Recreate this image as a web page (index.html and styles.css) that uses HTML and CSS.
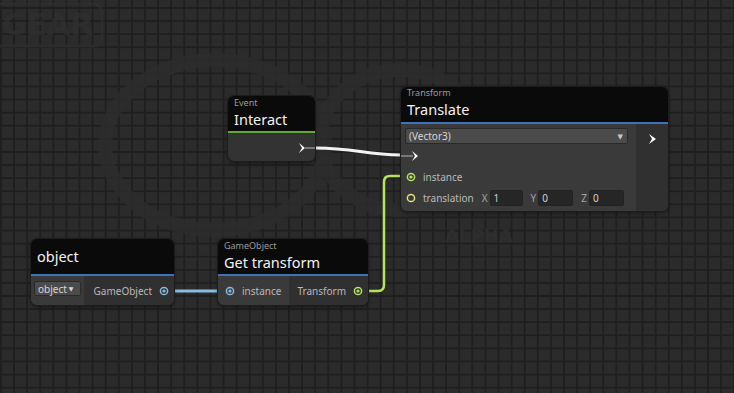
FILE: index.html
```html
<!DOCTYPE html>
<html lang="en">
<head>
  <meta charset="UTF-8" />
  <title>Graph</title>
  <link rel="stylesheet" href="styles.css">
</head>
<body>
  <div class="canvas">
    <!-- faint watermark behind the grid content -->
    <svg class="watermark" width="734" height="393">
      <rect x="-20" y="4" width="122" height="42" rx="8" fill="none" stroke="#2f2f2f" stroke-width="3"/>
      <text x="2" y="35" class="wm-text">GEAR</text>
      <ellipse cx="215" cy="145" rx="110" ry="85" fill="none" stroke="#2d2d2d" stroke-width="14"/>
      <ellipse cx="400" cy="140" rx="80" ry="70" fill="none" stroke="#2d2d2d" stroke-width="14"/>
      <text x="445" y="242" class="wm-small">ALPHA</text>
    </svg>

    <!-- wires -->
    <svg class="wires" width="734" height="393">
      <path d="M304 148 L316 148 C 355 148, 365 155, 401 155" stroke="#f2f2f2" stroke-width="3" fill="none"/>
      <path d="M168 291 L226 291" stroke="#86bddf" stroke-width="3" fill="none"/>
      <path d="M361 291 L378 291 Q384 291 384 285 L384 182 Q384 176 390 176 L408 176" stroke="#b6e35c" stroke-width="2.5" fill="none"/>
    </svg>

    <div class="node node-event">
      <div class="node-head head-green">
        <div class="node-kind">Event</div>
        <div class="node-title">Interact</div>
      </div>
      <div class="node-body body-out">
        <svg class="flow-out" width="18" height="12">
          <polygon points="1,1 4,6 1,11 7,6" fill="#fff"/>
          <rect x="6" y="5" width="12" height="2" fill="#777"/>
        </svg>
      </div>
    </div>

    <div class="node node-translate">
      <div class="node-head head-blue">
        <div class="node-kind">Transform</div>
        <div class="node-title">Translate</div>
      </div>
      <div class="node-body">
        <div class="col-in">
          <div class="dropdown wide">(Vector3)<span class="caret">&#9660;</span></div>
          <div class="row">
            <svg class="flow-in" width="18" height="12">
              <rect x="0" y="5" width="12" height="2" fill="#777"/>
              <polygon points="11,1 14,6 11,11 17,6" fill="#fff"/>
            </svg>
          </div>
          <div class="row">
            <svg class="port" width="10" height="10"><circle cx="5" cy="5" r="3.6" stroke="#b6e35c" stroke-width="1.5" fill="none"/><circle cx="5" cy="5" r="1.6" fill="#b6e35c"/></svg>
            <span class="label">instance</span>
          </div>
          <div class="row">
            <svg class="port" width="10" height="10"><circle cx="5" cy="5" r="3.6" stroke="#e4e27a" stroke-width="1.5" fill="none"/></svg>
            <span class="label">translation</span>
            <span class="axis">X</span><span class="field f-x">1</span>
            <span class="axis">Y</span><span class="field">0</span>
            <span class="axis">Z</span><span class="field">0</span>
          </div>
        </div>
        <div class="col-out">
          <svg class="flow-right" width="10" height="12"><polygon points="1,1 4,6 1,11 8,6" fill="#fff"/></svg>
        </div>
      </div>
    </div>

    <div class="node node-object">
      <div class="node-head head-blue solo">
        <div class="node-title">object</div>
      </div>
      <div class="node-body">
        <div class="col-in col-obj">
          <div class="dropdown small">object <span class="caret-s">&#9660;</span></div>
        </div>
        <div class="col-out out-row">
          <span class="label">GameObject</span>
          <svg class="port" width="10" height="10"><circle cx="5" cy="5" r="3.6" stroke="#86bddf" stroke-width="1.5" fill="none"/><circle cx="5" cy="5" r="1.6" fill="#86bddf"/></svg>
        </div>
      </div>
    </div>

    <div class="node node-get">
      <div class="node-head head-blue">
        <div class="node-kind">GameObject</div>
        <div class="node-title">Get transform</div>
      </div>
      <div class="node-body">
        <div class="col-in col-get">
          <svg class="port" width="10" height="10"><circle cx="5" cy="5" r="3.6" stroke="#86bddf" stroke-width="1.5" fill="none"/><circle cx="5" cy="5" r="1.6" fill="#86bddf"/></svg>
          <span class="label">instance</span>
        </div>
        <div class="col-out out-row">
          <span class="label">Transform</span>
          <svg class="port" width="10" height="10"><circle cx="5" cy="5" r="3.6" stroke="#b6e35c" stroke-width="1.5" fill="none"/><circle cx="5" cy="5" r="1.6" fill="#b6e35c"/></svg>
        </div>
      </div>
    </div>
  </div>
</body>
</html>
```

FILE: styles.css
```css
* {
  margin: 0;
  padding: 0;
  box-sizing: border-box;
}

body {
  background: #2b2b2b;
  font-family: 'Noto Sans', 'DejaVu Sans', sans-serif;
  overflow: hidden;
}

/* Grid canvas */
.canvas {
  position: relative;
  width: 734px;
  height: 393px;
  background-color: #2b2b2b;
  background-image:
    linear-gradient(to right, #1f1f1f 2px, transparent 2px),
    linear-gradient(to bottom, #1f1f1f 2px, transparent 2px);
  background-size: 13.1px 13.1px;
  background-position: 0px 7px;
}

.watermark,
.wires {
  position: absolute;
  left: 0;
  top: 0;
}

.watermark { opacity: 0.8; }

.wm-text {
  font-family: 'DejaVu Sans', sans-serif;
  font-weight: bold;
  font-size: 30px;
  fill: #2f2f2f;
}

.wm-small {
  font-family: 'DejaVu Sans', sans-serif;
  font-weight: bold;
  font-size: 18px;
  fill: #2f2f2f;
}

/* Nodes */
.node {
  position: absolute;
  border-radius: 6px;
  overflow: hidden;
  background: #333;
  box-shadow: 0 0 0 1px #1c1c1c, 0 2px 4px rgba(0, 0, 0, 0.4);
}

.node-event { left: 228px; top: 96px; width: 87px; height: 65px; }
.node-translate { left: 401px; top: 87px; width: 267px; height: 124px; }
.node-object { left: 31px; top: 239px; width: 143px; height: 66px; }
.node-get { left: 218px; top: 239px; width: 150px; height: 66px; }

.node-head {
  background: #0a0a0a;
  height: 37px;
  padding: 1px 6px 0;
  border-bottom: 2px solid #3a6fb0;
}

.node-translate .node-head { padding-top: 0; }

.head-green { border-bottom-color: #5da93c; }
.head-blue { border-bottom-color: #3d72b8; }

.node-head.solo {
  display: flex;
  align-items: center;
  padding-bottom: 3px;
}

.node-kind {
  font-size: 9px;
  line-height: 12px;
  color: #9b9b9b;
}

.node-title {
  font-size: 14.5px;
  line-height: 20px;
  color: #f2f2f2;
}

.node-body {
  display: flex;
  height: calc(100% - 37px);
}

.body-out {
  justify-content: flex-end;
  align-items: flex-start;
  padding-top: 9px;
}

.flow-out { margin-right: -1px; }

/* Columns */
.col-in {
  background: #3a3a3a;
  padding: 4px 8px 4px 4px;
  width: 235px;
}

.col-out {
  flex: 1;
  background: #303030;
}

.node-translate .col-out {
  display: flex;
  justify-content: center;
  align-items: flex-start;
  padding-top: 9px;
  padding-left: 2px;
}

.row {
  display: flex;
  align-items: center;
  height: 20px;
  margin-top: 1px;
}

.row:nth-child(2) { margin-top: 2px; }

.flow-in { margin-left: -4px; }

.port {
  flex: none;
  margin-left: 1px;
}

.label {
  font-size: 10px;
  color: #b9b9b9;
  white-space: nowrap;
}

.row .label { margin-left: 7px; }

.axis {
  font-size: 10px;
  color: #a5a5a5;
  margin-left: 8px;
  margin-right: 2px;
}

.field {
  width: 35px;
  height: 16px;
  background: #262626;
  border: 1px solid #222;
  border-radius: 2px;
  font-size: 10px;
  color: #d0d0d0;
  line-height: 15px;
  padding-left: 3px;
}

.f-x { width: 33px; }

.dropdown {
  background: #4b4b4b;
  border: 1px solid #2a2a2a;
  border-radius: 2px;
  color: #d6d6d6;
  font-size: 10px;
  display: flex;
  align-items: center;
}

.dropdown.wide {
  height: 16px;
  padding: 0 4px 0 3px;
  justify-content: space-between;
}

.caret {
  font-size: 7px;
  color: #c8c8c8;
}

.caret-s {
  font-size: 6px;
  margin-left: 2px;
}

.dropdown.small {
  height: 15px;
  padding: 0 3px 0 3px;
  width: 47px;
}

.col-obj {
  width: 53px;
  padding: 5px 0 0 3px;
  flex: none;
}

.col-get {
  width: 71px;
  flex: none;
  display: flex;
  align-items: center;
  padding: 0 0 0 6px;
}

.col-get .label { margin-left: 7px; }

.out-row {
  display: flex;
  align-items: center;
  justify-content: flex-end;
  padding-right: 5px;
  gap: 6px;
}
```
